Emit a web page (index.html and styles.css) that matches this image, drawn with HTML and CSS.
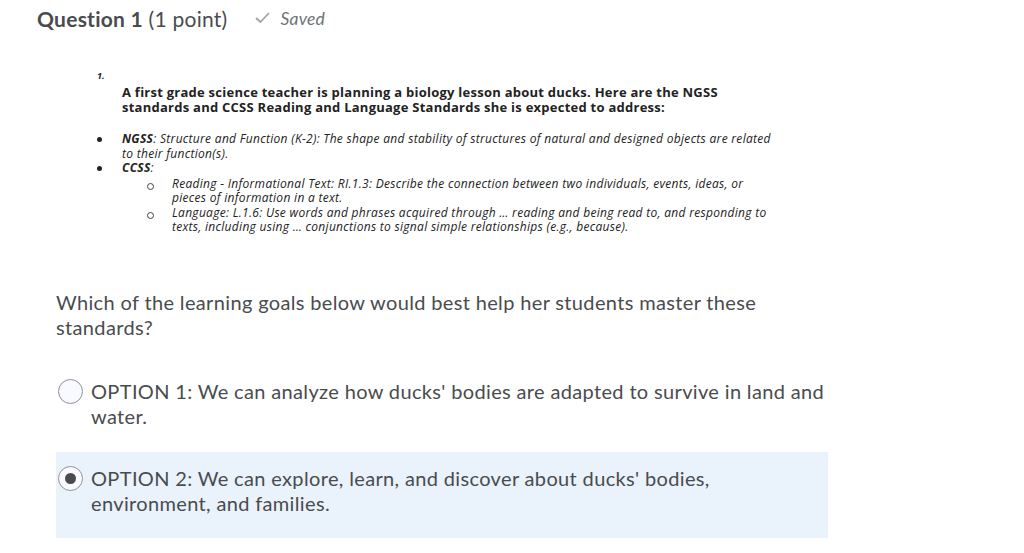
FILE: index.html
```html
<!DOCTYPE html>
<html>
<head>
<meta charset="utf-8">
<link rel="stylesheet" href="styles.css">
</head>
<body>
<div class="page">
  <header class="qhead">
    <h1 class="qtitle"><strong>Question 1</strong> (1 point)</h1>
    <span class="saved">
      <svg class="check" width="15" height="12" viewBox="0 0 15 12"><path d="M1.5 6.5 L5.5 10 L13.5 1.5" fill="none" stroke="#9ea3a6" stroke-width="1.8" stroke-linecap="round" stroke-linejoin="round"/></svg>
      <em>Saved</em>
    </span>
  </header>

  <div class="embed">
    <div class="num">1.</div>
    <p class="lead">A first grade science teacher is planning a biology lesson about ducks. Here are the NGSS<br>standards and CCSS Reading and Language Standards she is expected to address:</p>
    <ul class="std">
      <li><b>NGSS</b>: Structure and Function (K-2): The shape and stability of structures of natural and designed objects are related<br>to their function(s).</li>
      <li><b>CCSS</b>:
        <ul class="sub">
          <li>Reading - Informational Text: RI.1.3: Describe the connection between two individuals, events, ideas, or<br>pieces of information in a text.</li>
          <li>Language: L.1.6: Use words and phrases acquired through … reading and being read to, and responding to<br>texts, including using … conjunctions to signal simple relationships (e.g., because).</li>
        </ul>
      </li>
    </ul>
  </div>

  <p class="prompt">Which of the learning goals below would best help her students master these<br>standards?</p>

  <div class="options">
    <label class="opt">
      <span class="radio"></span>
      <span class="otext">OPTION 1: We can analyze how ducks' bodies are adapted to survive in land and<br>water.</span>
    </label>
    <label class="opt selected">
      <span class="radio on"></span>
      <span class="otext">OPTION 2: We can explore, learn, and discover about ducks' bodies,<br>environment, and families.</span>
    </label>
  </div>
</div>
</body>
</html>
```

FILE: styles.css
```css
* { box-sizing: border-box; }
html, body { margin: 0; padding: 0; background: #fff; }
body { font-family: Lato, "Liberation Sans", sans-serif; color: #494c4e; }
.page { padding: 0 0 0 37px; width: 1024px; }

.qhead { display: flex; align-items: baseline; gap: 28px; height: 40px; padding-top: 5px; }
.qtitle { margin: 0; font-size: 21px; font-weight: 400; line-height: 28px; letter-spacing: 0.25px; }
.qtitle strong { font-weight: 700; }
.saved { display: flex; align-items: center; gap: 10px; color: #6e7376; font-size: 17.5px; position: relative; top: -3px; }
.saved em { font-style: italic; letter-spacing: 0.2px; }

.embed { padding-left: 60px; margin-top: 31px; color: #222; font-family: "Open Sans", "Noto Sans", sans-serif; }
.num { font-size: 9px; font-weight: 700; font-style: italic; line-height: 10px; }
.lead { margin: 4px 0 0 25px; font-size: 13px; font-weight: 700; line-height: 15px; letter-spacing: 0.25px; }
.std { margin: 17px 0 0 0; padding: 0 0 0 25px; list-style: none; font-size: 12px; font-style: italic; line-height: 14.5px; letter-spacing: 0.3px; }
.std > li { position: relative; }
.std > li::before { content: ""; position: absolute; left: -25px; top: 5px; width: 5px; height: 5px; border-radius: 50%; background: #222; }
.std b { font-weight: 700; }
.sub { list-style: none; margin: 1px 0 0 0; padding: 0 0 0 50px; }
.sub > li { position: relative; }
.sub > li::before { content: ""; position: absolute; left: -25px; top: 6px; width: 5px; height: 5px; border-radius: 50%; border: 1px solid #444; }

.prompt { margin: 55px 0 0 19px; font-size: 20px; line-height: 25px; letter-spacing: 0.35px; }

.options { margin: 30px 0 0 19px; width: 772px; display: flex; flex-direction: column; gap: 13px; }
.opt { display: flex; align-items: flex-start; gap: 8px; padding: 9px 0 10px 2px; font-size: 20px; line-height: 25px; }
.opt.selected { background: #eaf2fb; padding: 14px 0 22px 2px; }
.radio { flex: none; width: 25px; height: 25px; border-radius: 50%; border: 1px solid #8f9396; background: #f9faff; position: relative; }
.radio.on::after { content: ""; position: absolute; left: 6px; top: 6px; width: 11px; height: 11px; border-radius: 50%; background: #494c4e; }
.otext { letter-spacing: 0.35px; }
```
